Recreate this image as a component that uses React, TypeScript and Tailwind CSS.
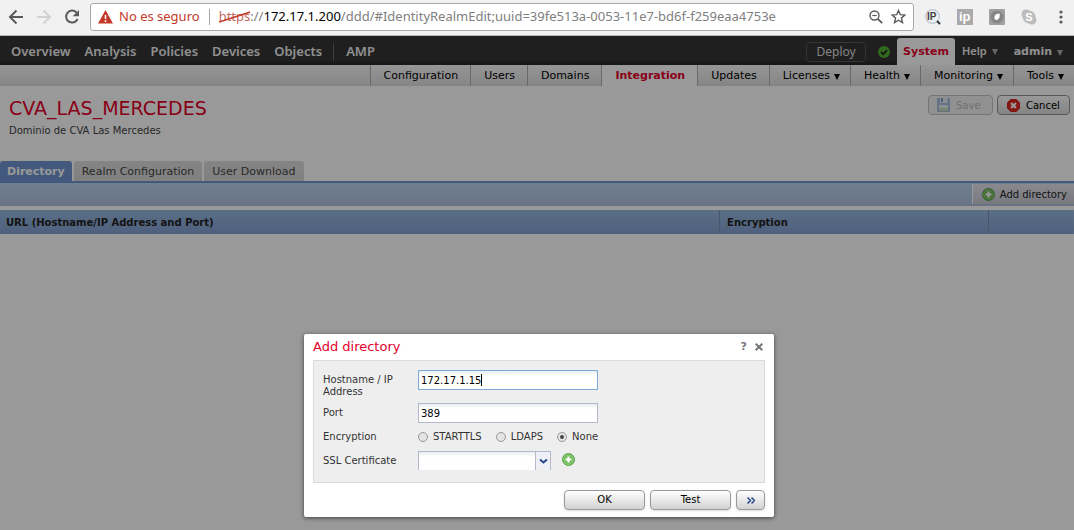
import React from 'react';

const mainLinks = ['Overview', 'Analysis', 'Policies', 'Devices', 'Objects'];

const subLinks = [
  { label: 'Configuration' },
  { label: 'Users' },
  { label: 'Domains' },
  { label: 'Integration', active: true },
  { label: 'Updates' },
  { label: 'Licenses', menu: true },
  { label: 'Health', menu: true },
  { label: 'Monitoring', menu: true },
  { label: 'Tools', menu: true },
];

const tabs = ['Directory', 'Realm Configuration', 'User Download'];

const Caret: React.FC = () => (
  <svg className="w-[6px] h-[6px] fill-current" viewBox="0 0 6 6" aria-hidden="true">
    <path d="M0 0h6L3 6z" />
  </svg>
);

const AddIcon: React.FC = () => (
  <svg className="w-[13px] h-[13px]" viewBox="0 0 13 13" aria-hidden="true">
    <circle cx="6.500" cy="6.500" r="6" fill="#6fbb59" stroke="#57a049" />
    <circle cx="6.500" cy="6.500" r="4.800" fill="none" stroke="#9bd588" strokeWidth=".7" />
    <path d="M6.500 3.500v6M3.500 6.500h6" stroke="#fff" strokeWidth="2.200" />
  </svg>
);

const BrowserBar: React.FC = () => (
  <div className="flex items-center h-9 pb-[2px] bg-[#f1f1f1] border-b border-[#b6b4b6]">
    <div className="flex items-center gap-3 pl-2 pr-[9px]">
      <button aria-label="Back">
        <svg className="w-4 h-4" viewBox="0 0 16 16" fill="none" stroke="#5a5a5a" strokeWidth="2">
          <path d="M15 8H2.500M8.500 1.500L2 8l6.500 6.500" />
        </svg>
      </button>
      <button aria-label="Forward">
        <svg className="w-4 h-4" viewBox="0 0 16 16" fill="none" stroke="#d2d2d2" strokeWidth="2">
          <path d="M1 8h12.500M7.500 1.500L14 8l-6.500 6.500" />
        </svg>
      </button>
      <button aria-label="Reload">
        <svg className="w-[17px] h-4" viewBox="0 0 17 16" fill="none">
          <path d="M12.500 3.500A6 6 0 1 0 13.600 10" stroke="#5a5a5a" strokeWidth="2" />
          <path d="M15 1v6.300H8.700z" fill="#5a5a5a" />
        </svg>
      </button>
    </div>
    <div className="flex flex-1 items-center h-7 px-[7px] bg-white border border-[#a9a9a9] rounded-[3px] font-['Noto_Sans','Open_Sans',sans-serif] text-[13px] whitespace-nowrap">
      <svg className="w-[15px] h-[14px] mr-[6px]" viewBox="0 0 15 14" aria-hidden="true">
        <path d="M7.500 0L15 13.500H0z" fill="#c53929" />
        <path d="M7.500 5v4M7.500 10.300v1.700" stroke="#fff" strokeWidth="1.600" />
      </svg>
      <span className="text-[#c53929]">No es seguro</span>
      <span className="w-px h-4 mx-[9px] bg-[#a5a5a5]" />
      <span className="relative text-[#c5695f]">
        https
        <svg className="absolute left-0 top-1 w-full h-3" viewBox="0 0 32 12" preserveAspectRatio="none" aria-hidden="true">
          <path d="M0 11L32 1" stroke="#c53929" strokeWidth="1.600" />
        </svg>
      </span>
      <span className="flex-1 text-[#808080]">
        ://<span className="text-black">172.17.1.200</span>/ddd/#IdentityRealmEdit;uuid=39fe513a-0053-11e7-bd6f-f259eaa4753e
      </span>
      <div className="flex items-center gap-2">
        <button aria-label="Zoom">
          <svg className="w-[14px] h-[14px]" viewBox="0 0 14 14" fill="none" stroke="#5a5a5a">
            <circle cx="5.500" cy="5.500" r="4.500" strokeWidth="1.400" />
            <path d="M3.300 5.500h4.400" strokeWidth="1.200" />
            <path d="M8.800 8.800l4.400 4.400" strokeWidth="1.800" />
          </svg>
        </button>
        <button aria-label="Bookmark">
          <svg className="w-[15px] h-[15px]" viewBox="0 0 15 15" fill="none" stroke="#5a5a5a" strokeWidth="1.400">
            <path d="M7.500 1.500l1.800 4.200 4.600.4-3.500 3 1.100 4.500-4-2.400-4 2.400 1.100-4.500-3.500-3 4.600-.4z" />
          </svg>
        </button>
      </div>
    </div>
    <div className="flex items-center gap-4 pl-[11px] pr-[5px]">
      <svg className="w-4 h-4" viewBox="0 0 16 16" aria-hidden="true">
        <circle cx="7.500" cy="7.500" r="6.800" fill="#edf0f2" stroke="#bbc4cb" strokeWidth="1.200" />
        <path d="M12 12l3 3" stroke="#333" strokeWidth="2" />
        <text x="2" y="11" fontFamily="Liberation Sans" fontSize="10" fontWeight="700" fill="#444">IP</text>
      </svg>
      <svg className="w-4 h-4" viewBox="0 0 16 16" aria-hidden="true">
        <path d="M0 0h16v16H0z" fill="#aaa" />
        <text x="2" y="12" fontFamily="Liberation Sans" fontSize="13" fontWeight="700" fill="#fff">ip</text>
      </svg>
      <svg className="w-4 h-4" viewBox="0 0 16 16" aria-hidden="true">
        <rect width="16" height="16" rx="1" fill="#a0a0a0" />
        <circle cx="8" cy="8" r="6.500" fill="#858585" />
        <path d="M6 10.500C4.500 7.500 6 4.500 10.500 4.500c.8 3-.5 6-3 6.500z" fill="#fff" />
      </svg>
      <svg className="w-4 h-4" viewBox="0 0 16 16" aria-hidden="true">
        <circle cx="5" cy="5" r="4.500" fill="#bdbdbd" />
        <circle cx="11" cy="11" r="4.500" fill="#bdbdbd" />
        <circle cx="8" cy="8" r="6.500" fill="#bdbdbd" />
        <text x="4.200" y="12" fontFamily="Liberation Sans" fontSize="11" fontWeight="700" fill="#fff">S</text>
      </svg>
      <button aria-label="Menu" className="w-4">
        <svg className="w-4 h-4" viewBox="0 0 16 16" fill="#5a5a5a">
          <circle cx="8" cy="3" r="1.600" />
          <circle cx="8" cy="8" r="1.600" />
          <circle cx="8" cy="13" r="1.600" />
        </svg>
      </button>
    </div>
  </div>
);

const MainNav: React.FC = () => (
  <nav className="flex items-center h-[29px] pl-[11px] pt-[2px] bg-gradient-to-b from-[#353535] from-80% to-[#282828] font-['Noto_Sans','Open_Sans',sans-serif] text-[13px] font-semibold text-[#eee]">
    <div className="flex items-center gap-[14px]">
      {mainLinks.map((link) => (
        <a key={link} href="#">{link}</a>
      ))}
    </div>
    <span className="w-px h-[18px] ml-[11px] mr-3 bg-[#6a6a6a]" />
    <a href="#">AMP</a>
    <div className="flex flex-1 justify-end items-center h-full text-[12px]">
      <button className="w-[60px] h-5 mr-3 rounded border border-[#5a5a5a] font-normal text-[#ddd]">Deploy</button>
      <svg className="w-3 h-3 mr-[7px]" viewBox="0 0 12 12" aria-hidden="true">
        <circle cx="6" cy="6" r="6" fill="#55ae36" />
        <path d="M3 6l2.300 2.300L9 4.200" fill="none" stroke="#222" strokeWidth="1.800" />
      </svg>
      <a href="#" className="flex items-center h-full px-[6px] pt-[2px] rounded-t-[3px] bg-white font-['DejaVu_Sans',sans-serif] text-[11px] font-bold text-[#e4002b]">System</a>
      <a href="#" className="flex items-center gap-[5px] px-[7px] text-[11px]">Help <span className="text-[#aaa]"><Caret /></span></a>
      <a href="#" className="flex items-center gap-[5px] pl-[9px] pr-[11px] pt-[2px] font-['DejaVu_Sans',sans-serif] text-[11px] font-bold">admin <span className="text-[#aaa]"><Caret /></span></a>
    </div>
  </nav>
);

const SubNav: React.FC = () => (
  <nav className="flex justify-end h-[21px] bg-gradient-to-b from-[#fafafa] to-[#dedede] text-[11px]">
    {subLinks.map(({ label, active, menu }) => (
      <a
        key={label}
        href="#"
        className={`flex items-center gap-1 pt-[2px] pl-[13px] border-l border-[#b0b0b0] ${menu ? 'pr-[10px]' : 'pr-3'} ${active ? 'bg-white font-bold text-[#e4002b]' : 'text-black'}`}
      >
        {label}
        {menu && <Caret />}
      </a>
    ))}
  </nav>
);

const RealmPage: React.FC = () => (
  <main>
    <header className="flex justify-between px-1 pl-[9px] pt-[9px] h-[75px]">
      <div>
        <h1 className="pt-[3px] text-[19px] leading-5 text-[#e4002b]">CVA_LAS_MERCEDES</h1>
        <p className="pt-[7px] text-[10px] leading-3 text-[#444]">Dominio de CVA Las Mercedes</p>
      </div>
      <div className="flex gap-1 text-[10px]">
        <button disabled className="flex items-center gap-[6px] w-[65px] h-5 pl-2 rounded-[4px] border border-[#c4c4c4] bg-[#f2f2f2] text-[#bbb]">
          <svg className="w-[13px] h-[14px]" viewBox="0 0 13 14" aria-hidden="true">
            <path d="M0 0h13v14H0z" fill="#a9bfdf" />
            <path d="M3 0h7.500v5H3z" fill="#e8edf4" />
            <path d="M4 0h2v4H4z" fill="#7e9cc9" />
            <path d="M2 7h9v6H2z" fill="#e9eef2" />
            <path d="M2 10h9v3H2z" fill="#c6dabd" />
          </svg>
          Save
        </button>
        <button className="flex items-center gap-[6px] w-[73px] h-5 pl-[9px] rounded-[4px] border border-[#949494] bg-gradient-to-b from-white to-[#ddd] text-black">
          <svg className="w-[13px] h-[13px]" viewBox="0 0 13 13" aria-hidden="true">
            <path d="M4 0h5l4 4v5l-4 4H4L0 9V4z" fill="#e0251f" stroke="#b91a1a" strokeWidth=".5" />
            <path d="M4 4l5 5M9 4L4 9" stroke="#fff" strokeWidth="2.200" />
          </svg>
          Cancel
        </button>
      </div>
    </header>
    <div role="tablist" className="flex gap-[2px] h-[22px] border-b-2 border-[#6e95d0] text-[11px]">
      {tabs.map((tab, i) => (
        <button
          key={tab}
          role="tab"
          aria-selected={i === 0}
          className={`rounded-t-[3px] pt-[2px] ${i === 0 ? 'px-[7px] bg-[#6e95d0] font-bold text-white' : 'px-2 bg-gradient-to-b from-[#dedede] to-[#d6d6d6] text-[#444]'}`}
        >
          {tab}
        </button>
      ))}
    </div>
    <div className="flex justify-end h-[23px] pt-px pb-[2px] bg-gradient-to-b from-[#bad3f0] to-[#aec2dd]">
      <button className="flex items-center gap-[5px] pl-[9px] pr-[7px] border-l border-white bg-gradient-to-b from-[#e6e5ed] to-[#c8cbd5] text-[10px] text-[#222]">
        <AddIcon />
        Add directory
      </button>
    </div>
    <table className="w-full mt-1 table-fixed text-left text-[10px] text-[#222]">
      <thead>
        <tr className="h-6 bg-gradient-to-b from-[#96b9df] to-[#84a0d2]">
          <th className="w-[67%] pl-[6px]">URL (Hostname/IP Address and Port)</th>
          <th className="w-[25%] pl-[7px] border-l border-[#7a90b8]">Encryption</th>
          <th className="border-l border-[#7a90b8]" aria-label="Actions" />
        </tr>
      </thead>
    </table>
  </main>
);

const inputClass =
  'w-[180px] h-5 px-[2px] border bg-gradient-to-b from-[#e9eff1] to-white to-30% text-[10px] text-black outline-none';
const radioClass =
  "appearance-none flex items-center justify-center w-[10px] h-[10px] rounded-full border border-[#999] bg-[#e4e4e4] checked:before:content-[''] checked:before:w-1 checked:before:h-1 checked:before:rounded-full checked:before:bg-[#444]";
const buttonClass =
  'h-5 rounded-[4px] border border-[#999] bg-gradient-to-b from-white to-[#d2d2d2] shadow-sm';

const AddDirectoryDialog: React.FC = () => (
  <section
    role="dialog"
    aria-labelledby="dialog-title"
    className="w-[470px] px-[9px] pb-[7px] rounded-[2px] bg-white shadow-[0_1px_4px_rgba(0,0,0,0.6)] text-[10px] leading-3 text-[#333]"
  >
    <div className="flex items-center justify-between h-[26px] pr-[2px]">
      <h2 id="dialog-title" className="text-[13px] text-[#e4002b]">Add directory</h2>
      <div className="flex items-center gap-2 text-[#777]">
        <button aria-label="Help" className="text-[11px] font-bold">?</button>
        <button aria-label="Close">
          <svg className="w-2 h-2" viewBox="0 0 8 8" stroke="#777" strokeWidth="2">
            <path d="M.7.700l6.600 6.600M7.300.700L.7 7.300" />
          </svg>
        </button>
      </div>
    </div>
    <div className="px-[9px] pt-[9px] pb-3 border border-[#dadada] bg-[#eee]">
      <div className="flex mb-[5px]">
        <label htmlFor="host" className="w-[95px] pt-1 pr-5">Hostname / IP Address</label>
        <div className="relative h-5">
          <input id="host" defaultValue="172.17.1.15" className={`${inputClass} border-[#7faad8]`} />
          <span className="absolute left-[63px] top-1 w-px h-3 bg-black" />
        </div>
      </div>
      <div className="flex mb-2">
        <label htmlFor="port" className="w-[95px] pt-1">Port</label>
        <input id="port" defaultValue="389" className={`${inputClass} border-[#b5b8c8]`} />
      </div>
      <fieldset className="flex items-center h-3 mb-2">
        <legend className="float-left w-[95px]">Encryption</legend>
        <div className="flex gap-[14px]">
          {['STARTTLS', 'LDAPS', 'None'].map((mode) => (
            <label key={mode} className="flex items-center gap-[5px]">
              <input type="radio" name="encryption" defaultChecked={mode === 'None'} className={radioClass} />
              {mode}
            </label>
          ))}
        </div>
      </fieldset>
      <div className="flex">
        <label htmlFor="certificate" className="w-[95px] pt-1">SSL Certificate</label>
        <div className="relative flex">
          <select id="certificate" className="appearance-none w-[133px] h-[19px] border border-b-0 border-[#b5b8c8] bg-gradient-to-b from-[#e9eff1] to-white to-30%">
            <option></option>
          </select>
          <span className="absolute right-0 top-0 flex items-center justify-center w-4 h-[19px] border border-b-0 border-[#b5b8c8] bg-[#eef0f5] pointer-events-none">
            <svg className="w-[9px] h-[5px]" viewBox="0 0 9 5" fill="none" stroke="#24478c" strokeWidth="2">
              <path d="M1 .5l3.500 3L8 .5" />
            </svg>
          </span>
        </div>
        <button aria-label="Add certificate" className="h-4 ml-[11px]"><AddIcon /></button>
      </div>
    </div>
    <div className="flex justify-end gap-[5px] pt-[7px] text-black">
      <button className={`${buttonClass} w-[81px]`}>OK</button>
      <button className={`${buttonClass} w-[81px]`}>Test</button>
      <button aria-label="Expand" className={`${buttonClass} flex items-center justify-center w-[29px]`}>
        <svg className="w-2 h-[7px]" viewBox="0 0 8 7" fill="none" stroke="#24478c" strokeWidth="1.500">
          <path d="M.5.500l3 3-3 3M4.500.500l3 3-3 3" />
        </svg>
      </button>
    </div>
  </section>
);

export default function App() {
  return (
    <div className="flex flex-col min-h-screen bg-white font-['DejaVu_Sans',sans-serif]">
      <BrowserBar />
      <div className="relative flex-1">
        <MainNav />
        <SubNav />
        <RealmPage />
        <div className="absolute inset-0 flex items-end justify-center pl-1 pb-[13px] bg-black/40">
          <AddDirectoryDialog />
        </div>
      </div>
    </div>
  );
}
